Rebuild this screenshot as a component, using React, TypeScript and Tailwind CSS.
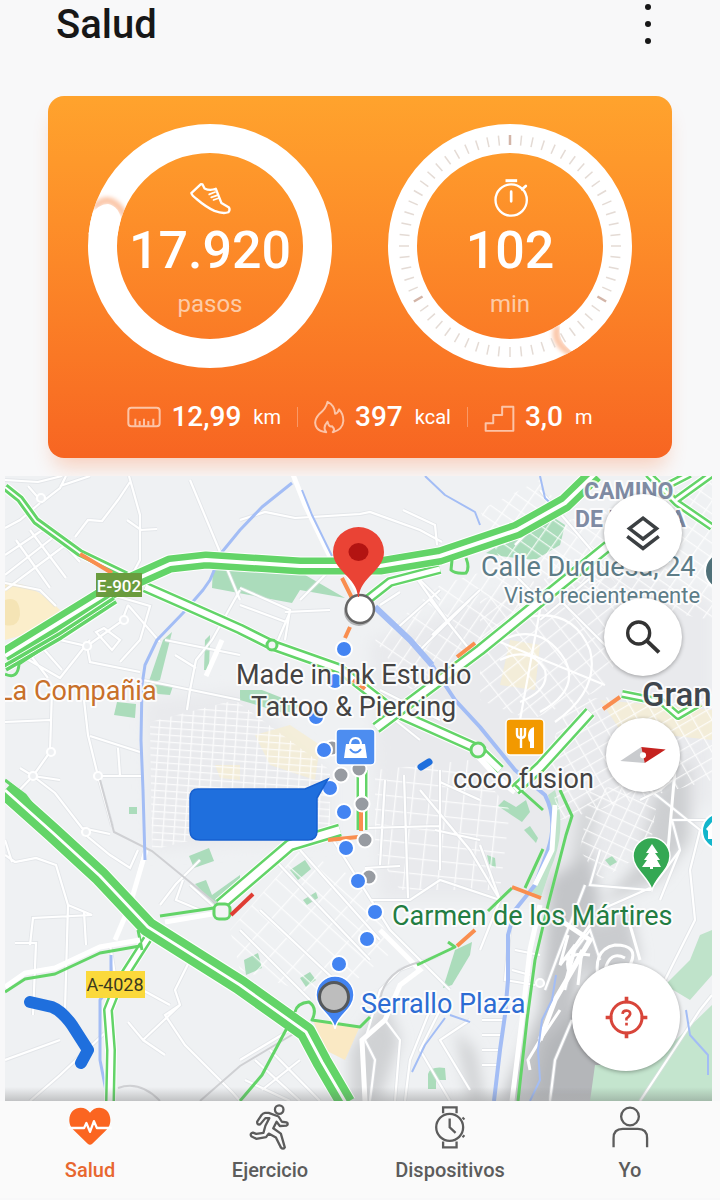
import type { ReactNode } from "react";

const GREEN = "#63d468";
const ORANGE = "#f98e4f";
const RIVER = "#a3bdf5";

// Minor streets, drawn in white over the base of the map
const streets = [
  "M129 476 L140 515 L140 560 L133 573",
  "M5 480 L38 482 L62 476 M28 486 L42 502 L60 488 L66 476 M60 486 L90 476 M40 503 L20 520 L5 528",
  "M75 537 L88 520 L102 521 L118 500 L130 482 M127 520 L141 530 L157 529",
  "M5 555 L50 525 M5 575 L60 532 M5 590 L72 540 M16 540 L50 588 M30 530 L66 578 M46 524 L80 562 M5 583 L40 590 L56 606",
  "M45 625 L88 600 L102 590 M60 640 L87 646 L122 621 L128 605 M87 646 L90 662 L140 672 M102 592 L150 606 L140 640 L120 662",
  "M75 610 L88 600 M20 655 L60 678 L90 640 M96 632 L112 650 L120 640 L104 628 Z M128 605 L160 642 M40 645 L62 670 M28 652 L48 678",
  "M52 690 L50 752 L33 776 L10 800 M5 722 L50 720 M84 700 L88 735 L98 776 L141 776 M33 776 L55 793 L82 828 L110 834",
  "M98 776 L112 826 M90 736 L140 752 M118 748 L120 776 M20 768 L33 776 L60 780",
  "M190 480 L240 600 M240 590 L212 640 L196 660 L190 690 L187 710 M165 640 L240 655 M175 655 L196 668 M143 680 L240 700",
  "M5 855 L15 862 L36 858 L56 865 L68 905 L92 915 L33 918 L30 945 M15 943 H36 L33 1015 M84 912 L86 945 M68 905 L65 1010",
  "M82 832 L110 855 L130 868 L138 850 M5 840 L12 862",
  "M145 850 L130 905 L115 940",
  "M183 880 L176 900 L200 910 M190 885 L220 912 M160 905 L176 884 L200 860",
  "M190 960 L175 990 L180 1005 L143 1040 L128 1022 M143 1040 L165 1055 M180 1005 L165 1015 L185 1045 L232 1092 L240 1101",
  "M110 945 L115 975 L170 1005 M108 1030 L60 1075 L30 1101",
  "M240 520 L265 512 L295 518 L360 514 L370 512 L420 530 L442 542",
  "M403 510 L435 525 L437 545 M470 600 L420 650 M440 590 L395 630 M430 600 L470 650 M418 580 L450 625 M480 590 L432 635 M400 592 L380 605",
  "M240 588 L290 610 L285 640 M285 612 L330 610 M300 600 L340 560 M290 612 L278 640 M240 605 L286 622",
  "M540 490 L600 560 M515 545 L560 500 M500 560 L540 600 M540 620 L600 570 M560 600 L610 650",
  "M400 560 L440 600 M370 700 L420 740 M380 690 L440 720",
  "M260 910 L340 985 M240 930 L310 1000 M275 860 L370 960 M300 850 L380 940 M330 835 L390 930 L450 990",
  "M404 775 L408 898 M365 828 L440 826 M365 868 L400 866 M370 900 H410 L440 880 L500 900 M385 780 L380 865 M440 770 V870",
  "M440 782 L480 800 M420 790 L470 850 L500 900 M435 830 L480 840",
  "M5 1060 L60 1040 M290 1030 L240 1060 M255 1060 L300 1101 M270 1050 L320 1101 M245 1080 L290 1101 M300 1060 L262 1090",
  "M370 1101 L375 1060 L365 1040 L380 990 L400 970 L440 955 M385 1020 L400 1040 L395 1101 M430 1010 L410 1060 L405 1101",
  "M440 1010 L420 1050 L450 1101 M470 1020 L440 1040 L470 1090",
  "M480 845 L500 900 L480 950 M482 1020 H505 M482 1035 H503 M482 1050 H500 M482 1065 H498",
  "M510 930 L505 980 L535 985 M515 950 L540 955 M512 970 L530 975",
  "M600 850 L590 885 L650 890 L680 850 L672 820 L712 820 M585 885 L560 950 L545 990 M650 888 L600 910",
  "M640 800 L660 790 L672 780 M650 790 L700 830 L690 870 L695 920 L680 950 L665 980 M680 850 L660 900",
  "M565 990 L575 950 L590 930 L600 960 M550 1101 L555 1060 L572 1020 M640 1101 L700 1010 L712 995",
];

const wideStreets = [
  "M292 472 L305 505 L334 565",
  "M222 640 L206 676",
  "M115 940 L130 905 L146 850",
  "M380 930 L420 970 L400 985 L385 1020 L362 1040 L365 1101",
  "M560 920 L590 940 L555 1000 L540 1040",
  "M340 560 L362 600",
];

const parks = [
  "M213 567 L300 572 L345 598 L300 590 L292 603 L212 588 Z",
  "M163 640 L172 632 L160 680 L148 684 Z",
  "M146 684 L173 686 L170 695 L158 694 Z",
  "M117 702 L136 704 L135 718 L114 715 Z",
  "M189 856 L209 848 L214 861 L194 868 Z",
  "M195 884 L206 880 L212 895 L240 875 L240 885 L215 905 Z",
  "M129 807 H137 V814 H129 Z",
  "M486 553 L550 515 L565 525 L560 545 L535 560 L500 556 Z",
  "M290 870 L305 860 L311 869 L298 880 Z",
  "M303 900 L316 892 L318 898 L307 905 Z",
  "M244 960 L258 953 L262 968 L246 975 Z",
  "M300 978 L310 972 L316 980 L306 987 Z",
  "M498 806 L504 800 L516 807 L526 800 L530 812 L522 822 Z",
  "M524 830 L530 826 L538 838 L536 843 Z",
  "M487 855 L495 858 L496 868 L489 864 Z",
  "M428 1074 Q430 1066 445 1068 L446 1080 H436 V1089 H428 Z",
  "M455 950 L472 942 L470 955 L452 985 L443 988 Z",
  "M605 860 L612 856 L617 862 L610 866 Z",
  "M240 690 L262 690 L300 705 L290 715 L240 700 Z",
  "M655 640 L662 630 L664 642 Z",
  "M205 640 L210 635 L209 670 L204 670 Z",
];

const blueDots = [
  [344, 649], [335, 681], [316, 717], [324, 750], [330, 788], [344, 812],
  [346, 848], [358, 881], [375, 912], [367, 939], [339, 964],
];
const grayDots = [[332, 748], [341, 775], [359, 769], [362, 804], [365, 840], [369, 877]];

const blocks = [
  { id: "grid-a", size: [11, 7], angle: 4, area: "M150 722 L235 700 L330 770 L330 835 L200 838 L152 850 Z" },
  { id: "grid-b", size: [24, 18], angle: 42, area: "M230 930 L300 850 L360 880 L395 950 L330 1000 L240 970 Z" },
  { id: "grid-c", size: [18, 14], angle: -38, area: "M480 600 L600 560 L640 620 L600 690 L530 720 L480 700 Z" },
  { id: "grid-d", size: [17, 15], angle: 6, area: "M375 770 L470 760 L510 810 L500 890 L400 890 L375 850 Z" },
  { id: "grid-e", size: [13, 20], angle: 34, area: "M375 640 L440 585 L520 560 L545 600 L470 660 L410 690 Z" },
  { id: "grid-f", size: [14, 12], angle: 25, area: "M590 790 L660 780 L650 850 L600 880 L580 850 Z" },
  { id: "grid-g", size: [16, 11], angle: -30, area: "M570 700 L712 690 L712 780 L560 820 L545 760 Z" },
  { id: "grid-h", size: [15, 12], angle: 35, area: "M480 510 L540 480 L570 520 L712 480 L712 620 L600 600 L500 560 Z" },
];

function Road({ d, width, gap }: { d: string; width: number; gap: number }) {
  return (
    <g fill="none" strokeLinejoin="round">
      <path d={d} stroke="#fff" strokeWidth={width + 2} />
      <path d={d} stroke={GREEN} strokeWidth={width} />
      <path d={d} stroke="#fff" strokeWidth={gap} />
    </g>
  );
}

function Label({ x, y, size, color, weight = 400, children }: { x: number; y: number; size: number; color: string; weight?: number; children: ReactNode }) {
  return (
    <text x={x} y={y} fontSize={size} fill={color} fontWeight={weight} stroke="#fff" strokeWidth={4} strokeOpacity={0.85} strokeLinejoin="round" paintOrder="stroke">
      {children}
    </text>
  );
}

function MapCanvas() {
  return (
    <svg viewBox="5 476 707 625" className="block w-full h-auto" role="img" aria-label="Mapa">
      <defs>
        {blocks.map((b) => (
          <pattern key={b.id} id={b.id} width={b.size[0]} height={b.size[1]} patternUnits="userSpaceOnUse" patternTransform={`rotate(${b.angle})`}>
            <path d={`M0 0 H${b.size[0]} M0 0 V${b.size[1]}`} stroke="#fff" strokeWidth="2.6" />
          </pattern>
        ))}
        <filter id="soft" x="-30%" y="-30%" width="160%" height="160%">
          <feGaussianBlur stdDeviation="7" />
        </filter>
        <linearGradient id="fade" x1="0" y1="0" x2="0" y2="1">
          <stop offset="0" stopColor="#555" stopOpacity="0" />
          <stop offset="1" stopColor="#555" stopOpacity="0.3" />
        </linearGradient>
      </defs>

      <rect x="5" y="476" width="707" height="625" fill="#eff1f3" />
      <g fill="#e9eaed" filter="url(#soft)">
        <path d="M370 640 L600 560 L712 600 L712 800 L560 900 L380 900 Z" />
        <path d="M145 700 L240 690 L330 770 L330 840 L150 850 Z" />
      </g>

      {/* relief */}
      <g filter="url(#soft)">
        <path d="M550 880 L590 850 L600 900 L580 960 L570 1101 L500 1101 L540 1010 Z" fill="#c3c5c8" />
        <path d="M545 1040 L590 1000 L640 1070 L620 1101 L530 1101 Z" fill="#b4b6b9" />
        <path d="M655 790 L690 760 L690 840 L660 880 L600 905 L640 860 Z" fill="#cdcfd1" />
        <path d="M575 930 L630 910 L640 960 L590 990 Z" fill="#cacccf" />
        <path d="M350 1050 L385 1000 L400 1040 L380 1101 L350 1101 Z" fill="#d0d2d4" />
        <path d="M580 810 L600 790 L590 850 L570 870 Z" fill="#d2d4d6" />
        <path d="M455 1030 L475 1050 L485 1101 L470 1101 Z" fill="#d0d2d4" />
      </g>

      <path d="M5 583 Q30 580 60 610 L40 630 L5 640 Z" fill="#fbeecb" />
      <path d="M5 600 Q20 595 20 615 Q18 628 5 625 Z" fill="#f5e4b5" />
      <path d="M313 1020 L360 1026 L345 1060 L325 1050 Z" fill="#fae9c4" />
      <path d="M255 735 L290 725 L320 745 L315 780 L270 765 Z M510 640 L540 645 L535 690 L500 685 Z M600 700 L712 710 L712 740 L620 730 Z M215 765 L240 765 L240 780 L220 778 Z" fill="#f6edd2" opacity="0.75" />
      <path d="M590 1101 L595 1065 L650 1065 L712 1005 V1101 Z" fill="#c4e5ce" />
      <path d="M712 930 L700 935 L690 960 L665 985 L690 1000 L712 975 Z" fill="#bfe3ca" />
      <path d="M555 790 Q568 830 550 870 L540 900 L530 890 Q560 840 548 795 Z" fill="#bfe3ca" />
      <g fill="#abdcbb">
        {parks.map((d) => <path key={d} d={d} />)}
      </g>

      {blocks.map((b) => <path key={b.id} d={b.area} fill={`url(#${b.id})`} opacity="0.8" />)}
      <g fill="none" stroke="#dcdfe3" strokeWidth="4" opacity="0.6">
        {streets.map((d) => <path key={d} d={d} />)}
      </g>
      <g fill="none" stroke="#fff" strokeWidth="2.2">
        {streets.map((d) => <path key={d} d={d} />)}
        {[[41, 498], [124, 620], [87, 646], [51, 752], [33, 776], [98, 776], [86, 832], [540, 983]].map(([x, y]) => (
          <circle key={`${x}-${y}`} cx={x} cy={y} r="4" fill="#eef0f2" />
        ))}
        <path d="M498 642 Q540 620 565 660 Q580 690 540 712 M510 622 Q570 600 590 650 Q600 690 555 722 M500 660 Q530 645 545 670 Q550 690 520 702 M495 640 L605 685 M540 610 L520 720" />
      </g>
      <g fill="none" stroke="#fff" strokeWidth="5">
        {wideStreets.map((d) => <path key={d} d={d} />)}
      </g>
      <path d="M100 780 L114 832 L152 851 L218 905 M118 1088 Q140 1080 160 1101 M200 1101 L240 1066 L300 1030 M380 1000 Q385 970 420 962" fill="none" stroke="#cfd0d3" strokeWidth="2" />
      <path d="M590 955 Q560 950 570 975 M568 935 L560 965 L575 945 L566 980 L582 950 L578 985 M600 985 Q590 950 615 945 Q640 945 630 965 M605 970 Q610 950 625 958 M565 960 L590 925 M630 925 L640 960 M660 790 L675 770 L668 850 M560 1010 L540 1040 L528 1060 L530 1070" fill="none" stroke="#fff" strokeWidth="3" />

      {/* water */}
      <g fill="none" stroke={RIVER} strokeWidth="3" strokeLinejoin="round">
        <path d="M292 483 L262 507 L240 530 L222 552 L210 580 L203 590 L183 613 L157 640 L145 665 L142 685 L141 740 L143 790 L145 860" />
        <path d="M111 955 V985 L100 1000 L100 1060 L108 1101" />
        <path d="M540 476 L545 498 L556 508 M302 490 L312 515 L332 556 M425 476 L445 495 L475 512 L480 525" strokeWidth="2" />
        <path d="M375 607 L410 640 L432 665" strokeWidth="6" />
        <path d="M432 665 L455 700 L480 727 L515 770 L545 795 Q558 820 548 850 L535 885 L515 910 L508 935 L508 980 L505 1015 L500 1050 L494 1101" strokeWidth="4" />
        <path d="M556 975 L552 1000 L542 1020 L538 1050 L540 1080 L530 1101 M445 1018 L425 1045 L412 1072 M450 1015 L470 1022 M686 1010 L690 1035 L708 1055 V1075" strokeWidth="2" />
      </g>

      {/* traffic */}
      <Road d="M5 487 L20 499 L36 521 L80 553 L130 577" width={8} gap={2} />
      <Road d="M145 587 L195 609 L240 629 L272 645 L340 669 L395 712 L478 749 L500 770" width={11} gap={6} />
      <path d="M478 756 L500 780 L515 792" fill="none" stroke="#fff" strokeWidth="6" />
      <Road d="M376 728 L480 650 L608 546" width={12} gap={7} />
      <Road d="M362 604 L390 582 L440 569" width={10} gap={5} />
      <Road d="M362 770 V830" width={11} gap={6} />
      <Road d="M515 790 L540 767 L590 712" width={12} gap={7} />
      <Road d="M622 694 L662 702 L678 716 L700 703" width={8} gap={3} />
      <Road d="M220 905 L290 845 L340 830" width={13} gap={8} />
      <Road d="M150 935 L118 985 L108 1010 L111 1050 L110 1101" width={10} gap={5} />
      <Road d="M648 474 L677 503 L712 527 M655 492 L690 474 M676 500 L712 474" width={8} gap={3} />
      <Road d="M5 656 L112 590 L170 564 L206 560 L300 566 L380 566 L440 556 L517 530 L565 503 L595 474" width={17} gap={4} />
      <Road d="M5 668 L60 636 L115 600" width={8} gap={1} />
      <Road d="M5 790 L52 832 L100 876 L148 927 L240 985 L306 1032 L322 1062 L346 1103" width={19} gap={3} />
      <g fill="none" stroke={GREEN} strokeWidth="3" strokeLinejoin="round">
        <path d="M5 674 Q18 680 19 664 L40 650 M5 780 L25 795 L38 812" />
        <path d="M452 560 L451 570 Q455 574 466 573 Q470 568 466 558" />
        <path d="M160 916 L214 908 M138 930 L142 950" />
        <path d="M5 992 L25 979 L55 974 L100 953 L140 946" />
        <path d="M240 1101 L262 1075 L288 1026 M295 1012 Q297 1003 309 1002 Q318 1008 312 1020 L360 1027 L370 1017" />
        <path d="M417 965 L455 947 L448 942" />
        <path d="M515 785 L543 810 M560 790 L572 816 L566 835 L548 905 L535 960 L527 1020 L518 1101 M543 849 L525 888 M512 888 L488 911" />
      </g>
      <path d="M5 987 L25 973 L55 968 L100 947 L140 940 M540 905 L530 950 L522 1020 L512 1101 M555 805 L552 850 L535 885 M165 922 L212 914" fill="none" stroke="#fff" strokeWidth="5" />
      <g fill="#f3f4f5" stroke={GREEN} strokeWidth="3">
        <rect x="214" y="904" width="16" height="15" rx="5" />
        <circle cx="478" cy="750" r="7" />
        <circle cx="272" cy="645" r="5" />
      </g>
      <g fill="none" stroke={ORANGE} strokeWidth="4">
        <path d="M80 554 L112 573 M342 578 L352 598 M350 627 L345 638 M353 680 L365 689 M457 657 L475 643 M603 709 L620 697 M361 812 L361 831 M328 840 L358 837 M512 887 L541 898 M457 946 L475 930" />
        <path d="M231 915 L253 894" stroke="#df3d34" />
      </g>

      {/* route */}
      <g stroke="#fff" strokeWidth="2">
        {grayDots.map(([x, y]) => <circle key={`${x}-${y}`} cx={x} cy={y} r="7.5" fill="#979ba1" />)}
        {blueDots.map(([x, y]) => <circle key={`${x}-${y}`} cx={x} cy={y} r="8" fill="#4384f2" />)}
      </g>

      <g fontFamily="Roboto, sans-serif">
        <Label x={584} y={499} size={23} color="#7f8ba3" weight={700}>CAMINO</Label>
        <Label x={575} y={527} size={23} color="#7f8ba3" weight={700}>DE RONDA</Label>
        <Label x={481} y={576} size={27} color="#5d7c87">Calle Duquesa, 24</Label>
        <Label x={504} y={603} size={22} color="#5d7c87">Visto recientemente</Label>
        <Label x={236} y={684} size={27} color="#444343">Made in Ink Estudio</Label>
        <Label x={251} y={716} size={27} color="#444343">Tattoo &amp; Piercing</Label>
        <Label x={453} y={788} size={27} color="#444343">coco fusion</Label>
        <Label x={392} y={925} size={27} color="#237d42">Carmen de los Mártires</Label>
        <Label x={361} y={1013} size={27} color="#2c6cd3">Serrallo Plaza</Label>
        <Label x={-2} y={700} size={27} color="#c8702a">La Compañia</Label>
        <Label x={642} y={706} size={33} color="#3f464d" weight={500}>Gran</Label>
        <rect x="96" y="573" width="46" height="24" fill="#6a9c3e" />
        <text x="119" y="592" fontSize="17" fontWeight="500" fill="#fff" textAnchor="middle">E-902</text>
        <rect x="86" y="971" width="59" height="27" fill="#fbd93b" />
        <text x="115" y="991" fontSize="18" fill="#3c3a20" textAnchor="middle">A-4028</text>
      </g>

      {/* places */}
      <rect x="336" y="729" width="39" height="36" rx="4" fill="#4d8df0" stroke="#fff" strokeWidth="1.5" />
      <path d="M346 744 H365 L367 758 H344 Z" fill="#fff" />
      <path d="M350 745 Q350 738 355.5 738 Q361 738 361 745" fill="none" stroke="#fff" strokeWidth="2" />
      <path d="M350 749 Q355.5 756 361 749" fill="none" stroke="#4d8df0" strokeWidth="2" />
      <rect x="506" y="719" width="38" height="36" rx="4" fill="#f29900" stroke="#fff" strokeWidth="1.5" />
      <path d="M517 728 V734 Q517 738 521 738 Q525 738 525 734 V728 M521 728 V748" fill="none" stroke="#fff" strokeWidth="2.4" />
      <path d="M530 748 V742 Q528 741 528 735 Q529 728 534 727 V748 Z" fill="#fff" />
      <path d="M652 890 C648 877 633 869 633 856 A18.5 18.5 0 0 1 670 856 C670 869 656 877 652 890 Z" fill="#34a853" stroke="#fff" strokeWidth="1.5" />
      <path d="M652 844 L658 853 H655 L660 860 H657 L661 867 H653 V869 H650 V867 H642 L647 860 H644 L649 853 H646 Z" fill="#fff" />
      <circle cx="720" cy="831" r="18" fill="#12b5cb" stroke="#fff" strokeWidth="2" />
      <path d="M706 829 L712 822 V839 H708 V831 Z" fill="#fff" />
      <circle cx="724" cy="571" r="19" fill="#4f7078" stroke="#fff" strokeWidth="2" />

      {/* hidden captions */}
      <path d="M198 789 H305 L328 779 L317 798 V831 Q317 840 308 840 H200 Q190 840 190 831 V798 Q190 789 198 789 Z" fill="#1f6fdd" stroke="#1760cf" strokeWidth="1.5" />
      <path d="M30 1002 L52 1007 Q62 1011 72 1025 L88 1050 L81 1063" fill="none" stroke="#1f6fdd" strokeWidth="12" strokeLinecap="round" strokeLinejoin="round" />
      <path d="M421 767 L429 762" stroke="#1f6fdd" strokeWidth="7" strokeLinecap="round" />

      {/* end points */}
      <path d="M335 1029 C333 1015 316 1010 316 995 A19 19 0 0 1 354 995 C354 1010 337 1015 335 1029 Z" fill="#4384f2" stroke="#fff" strokeWidth="1.5" />
      <circle cx="334" cy="997" r="14.5" fill="#bdbdbd" stroke="#55585b" strokeWidth="3" />
      <circle cx="359" cy="611" r="15" fill="#777" opacity="0.5" />
      <circle cx="360" cy="609" r="14" fill="#fff" stroke="#666" strokeWidth="2.5" />
      <path d="M358 597 C357 577 333 571 333 552 A25.5 25 0 0 1 384 552 C384 571 360 577 359 597 Z" fill="#ea4335" />
      <ellipse cx="358.5" cy="552" rx="10" ry="9" fill="#b31412" />

      <rect x="5" y="1087" width="707" height="14" fill="url(#fade)" />
    </svg>
  );
}

function MapPanel() {
  const round = "flex items-center justify-center rounded-full bg-white shadow-[0_1px_4px_rgba(0,0,0,0.35)]";
  return (
    <section className="relative mt-[18px] ml-[5px] mr-2 overflow-hidden">
      <MapCanvas />
      <div className="absolute top-[18px] right-[30px] flex flex-col items-center gap-[26px]">
        <button aria-label="Capas" className={`${round} size-[78px]`}>
          <svg viewBox="435 133 108 114" className="size-9" fill="none" stroke="#3c4043" strokeWidth="11">
            <path d="M489 143 L532 176 L489 209 L446 176 Z M439 201 L489 239 L539 201" />
          </svg>
        </button>
        <button aria-label="Buscar" className={`${round} size-[78px]`}>
          <svg viewBox="432 448 108 104" className="size-9" fill="none" stroke="#333" strokeWidth="10">
            <circle cx="473" cy="488" r="33" />
            <path d="M497 511 L534 546" strokeWidth="12" />
          </svg>
        </button>
        <button aria-label="Brújula" className={`${round} mt-4 size-[74px]`}>
          <svg viewBox="415 820 136 56" className="w-[46px] h-5">
            <path d="M416 866 L478 824 L488 872 Z" fill="#c9cbce" />
            <path d="M478 824 L550 832 L488 872 Z" fill="#c5221f" />
            <circle cx="483" cy="849" r="9" fill="#fff" />
          </svg>
        </button>
      </div>
      <button aria-label="Mi ubicación" className={`${round} absolute right-8 bottom-[30px] size-[108px]`}>
        <svg viewBox="370 646 130 130" className="size-[43px]" fill="none" stroke="#d8453a" strokeWidth="9">
          <circle cx="435" cy="711" r="47" />
          <path d="M435 648 V668 M435 754 V774 M372 711 H392 M478 711 H498" strokeWidth="11" />
          <path d="M423 700 Q424 690 435 690 Q447 691 446 701 Q444 708 435 714 V720 M435 727 V735" strokeWidth="8" />
        </svg>
      </button>
    </section>
  );
}

function StepsRing() {
  return (
    <svg viewBox="0 0 244 244" className="absolute inset-0 size-full">
      <defs>
        <filter id="blur" x="-50%" y="-50%" width="200%" height="200%">
          <feGaussianBlur stdDeviation="2" />
        </filter>
        <clipPath id="band">
          <path clipRule="evenodd" d="M0 122 A122 122 0 1 1 244 122 A122 122 0 1 1 0 122 Z M29 122 A93 93 0 1 0 215 122 A93 93 0 1 0 29 122 Z" />
        </clipPath>
      </defs>
      <circle cx="122" cy="122" r="107.5" fill="none" stroke="#fff" strokeWidth="29" />
      <g clipPath="url(#band)">
        <path d="M6 84 Q22 66 37 92" fill="none" stroke="#fbc6a8" strokeWidth="7" filter="url(#blur)" />
        <path d="M2 92 Q10 80 20 80 Q31 82 34 98 L28 116 L0 110 Z" fill="#fff" />
      </g>
    </svg>
  );
}

function MinutesRing() {
  return (
    <svg viewBox="0 0 244 244" className="absolute inset-0 size-full">
      <circle cx="122" cy="122" r="107.5" fill="none" stroke="#fff" strokeWidth="29" />
      <g clipPath="url(#band)">
        <path d="M170 202 Q163 218 184 230" fill="none" stroke="#fbc6a8" strokeWidth="7" filter="url(#blur)" />
        <path d="M173 198 Q167 216 186 229 L204 216 L190 190 Z" fill="#fff" />
      </g>
      {Array.from({ length: 60 }, (_, i) => (
        <path
          key={i}
          d="M122 11 V21"
          stroke={i % 20 === 0 ? "#d3b5a8" : "#e4dbd5"}
          strokeWidth={i % 20 === 0 ? 2.5 : 1.5}
          transform={`rotate(${i * 6} 122 122)`}
        />
      ))}
    </svg>
  );
}

function Gauge({ ring, icon, value, unit }: { ring: ReactNode; icon: ReactNode; value: string; unit: string }) {
  return (
    <div className="relative flex size-[244px] flex-col items-center pt-[54px]">
      {ring}
      <div className="relative flex h-10 items-center">{icon}</div>
      <div className="relative text-[52px] leading-[66px] font-medium">{value}</div>
      <div className="relative mt-1 text-2xl leading-8 text-white/60">{unit}</div>
    </div>
  );
}

function Stat({ icon, value, unit }: { icon: ReactNode; value: string; unit: string }) {
  return (
    <div className="flex items-center">
      {icon}
      <span className="ml-[10px] text-[28px] leading-8 font-medium">{value}</span>
      <span className="ml-3 text-xl leading-8">{unit}</span>
    </div>
  );
}

function SummaryCard() {
  return (
    <section className="mx-12 rounded-2xl bg-linear-to-b from-[#ffa32d] to-[#f76522] pt-7 pb-6 text-white shadow-[0_14px_20px_-6px_rgba(247,101,34,0.28)]">
      <div className="flex justify-between px-10">
        <Gauge
          ring={<StepsRing />}
          value="17.920"
          unit="pasos"
          icon={
            <svg viewBox="455 270 130 105" className="w-[43px] h-[35px]" fill="none" stroke="#fff" strokeWidth="7" strokeLinejoin="round" strokeLinecap="round">
              <path d="M491 279 L462 306 Q464 314 478 324 Q506 348 532 360 Q558 370 574 364 Q580 357 576 350 L553 336 L536 293 Q518 300 502 292 L496 280 Z" />
              <path d="M516 310 L534 303 M522 319 L540 313 M529 327 L546 321" strokeWidth="5" />
            </svg>
          }
        />
        <Gauge
          ring={<MinutesRing />}
          value="102"
          unit="min"
          icon={
            <svg viewBox="388 262 104 120" className="w-[35px] h-10" fill="none" stroke="#fff" strokeWidth="7">
              <circle cx="442" cy="328" r="47" />
              <path d="M425 270 H460" strokeWidth="9" />
              <path d="M442 303 V332 M475 296 L486 286" strokeWidth="8" strokeLinecap="round" />
            </svg>
          }
        />
      </div>
      <div className="mt-8 flex items-center justify-center">
        <Stat
          value="12,99"
          unit="km"
          icon={
            <svg viewBox="258 945 102 64" className="w-[34px] h-[22px] opacity-60" fill="none" stroke="#fff" strokeWidth="6">
              <rect x="262" y="949" width="94" height="56" rx="9" />
              <path d="M283 1003 V982 M296 1003 V989 M309 1003 V982 M322 1003 V989 M337 1003 V982" />
            </svg>
          }
        />
        <span className="mx-4 h-5 w-px bg-white/30" />
        <Stat
          value="397"
          unit="kcal"
          icon={
            <svg viewBox="825 925 94 102" className="w-[31px] h-[34px] opacity-60" fill="none" stroke="#fff" strokeWidth="6" strokeLinejoin="round">
              <path d="M866 930 Q862 950 842 966 Q820 990 834 1010 Q842 1020 862 1022 Q850 1008 866 990 Q870 1008 880 1004 Q890 1014 882 1022 Q912 1014 914 988 Q914 966 901 953 Q898 964 889 966 Q888 940 866 930 Z" />
            </svg>
          }
        />
        <span className="mx-4 h-5 w-px bg-white/30" />
        <Stat
          value="3,0"
          unit="m"
          icon={
            <svg viewBox="387 943 94 84" className="mt-1 w-[31px] h-7 opacity-60" fill="none" stroke="#fff" strokeWidth="6" strokeLinejoin="round">
              <path d="M392 1021 V998 H415 V973 H442 V948 H476 V1021 Z" />
            </svg>
          }
        />
      </div>
    </section>
  );
}

const tabs = [
  {
    label: "Salud",
    icon: (
      <svg viewBox="200 30 140 140" className="size-[46px]">
        <path d="M270 57 C254 30 207 38 207 79 C207 96 216 106 224 113 L263 151 Q270 157 277 151 L316 113 C324 106 332 96 332 79 C332 38 286 30 270 57 Z" fill="#fb6521" />
        <path d="M204 103 H252 L259 88 L270 115 L282 82 L291 103 H336" fill="none" stroke="#fff" strokeWidth="7" strokeLinejoin="round" />
      </svg>
    ),
  },
  {
    label: "Ejercicio",
    icon: (
      <svg viewBox="740 28 140 140" className="size-[46px]" fill="none" stroke="#5c5c5c" strokeWidth="7" strokeLinejoin="round">
        <circle cx="838" cy="45" r="13" />
        <path d="M795 55 Q788 56 784 62 L771 82 Q770 92 780 90 L796 71 L808 71 L796 94 L790 116 L768 119 L758 115 Q748 118 753 126 L768 134 L798 129 L806 118 L828 130 L843 160 Q850 168 855 160 L843 118 L820 102 L830 82 L840 95 L860 94 Q868 88 860 84 L846 82 L836 66 L806 55 Z" />
      </svg>
    ),
  },
  {
    label: "Dispositivos",
    icon: (
      <svg viewBox="200 28 140 140" className="size-[46px]" fill="none" stroke="#5c5c5c" strokeWidth="7">
        <circle cx="269" cy="99" r="41" />
        <path d="M269 72 V99 L287 116 M249 56 V38 H290 V56 M249 142 V160 H290 V142" />
        <path d="M308 69 L314 75 M314 123 L308 129" strokeWidth="6" />
      </svg>
    ),
  },
  {
    label: "Yo",
    icon: (
      <svg viewBox="740 28 140 140" className="size-[46px]" fill="none" stroke="#5c5c5c" strokeWidth="7">
        <circle cx="810" cy="66" r="27" />
        <path d="M760 160 V132 Q760 104 788 104 H834 Q862 104 862 132 V160" />
      </svg>
    ),
  },
];

export default function App() {
  return (
    <div className="min-h-screen bg-[#f8f8f9] font-[Roboto,sans-serif]">
      <header className="flex h-24 items-start justify-between pl-14 pr-[60px]">
        <h1 className="text-[40px] leading-[50px] font-medium text-[#171717]">Salud</h1>
        <button aria-label="Más opciones" className="flex w-6 flex-col items-center gap-[11px] pt-1">
          <span className="size-[6px] rounded-full bg-[#171717]" />
          <span className="size-[6px] rounded-full bg-[#171717]" />
          <span className="size-[6px] rounded-full bg-[#171717]" />
        </button>
      </header>
      <SummaryCard />
      <MapPanel />
      <nav className="grid grid-cols-4 bg-[#fafafa] pt-[3px] pb-4">
        {tabs.map((tab, i) => (
          <a key={tab.label} href="#" className="flex flex-col items-center">
            {tab.icon}
            <span className={`mt-2 text-xl leading-6 font-medium ${i === 0 ? "text-[#e8672f]" : "text-[#5c5c5c]"}`}>{tab.label}</span>
          </a>
        ))}
      </nav>
    </div>
  );
}
